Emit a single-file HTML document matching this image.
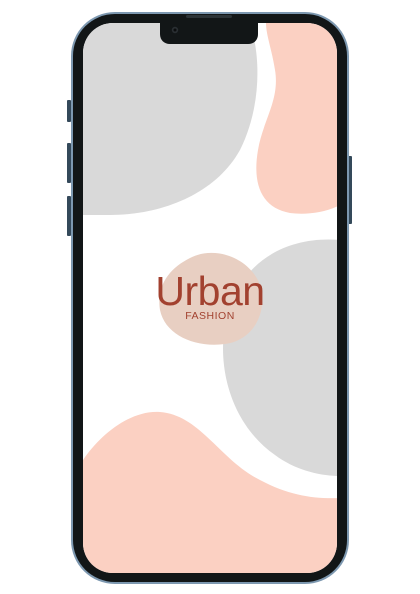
<!DOCTYPE html>
<html><head><meta charset="utf-8"><style>
html,body{margin:0;padding:0;background:#fff;width:420px;height:594px;overflow:hidden}
</style></head><body>
<svg width="420" height="594" viewBox="0 0 420 594" xmlns="http://www.w3.org/2000/svg">
<defs><clipPath id="scr"><rect x="83" y="23" width="254" height="550" rx="30"/></clipPath></defs>
<!-- side buttons -->
<rect x="67" y="100" width="4" height="22" rx="1" fill="#34495a"/>
<rect x="67" y="143" width="4" height="40" rx="1" fill="#34495a"/>
<rect x="67" y="196" width="4" height="40" rx="1" fill="#34495a"/>
<rect x="348" y="156" width="4" height="68" rx="1" fill="#34495a"/>
<!-- frame -->
<rect x="71" y="12" width="278" height="572" rx="44" fill="#7d98b0"/>
<rect x="73" y="14" width="274" height="568" rx="42" fill="#121617"/>
<rect x="83" y="23" width="254" height="550" rx="30" fill="#fff"/>
<g clip-path="url(#scr)">
<path d="M83 23 L250 23 C262 60 260 110 240 150 C215 195 160 215 110 215 L83 215 Z" fill="#d9d9d9"/>
<path d="M266 23 L340 23 L340 205 C325 213 305 215 290 213 C262 208 252 185 258 150 C263 120 280 100 275 70 C272 50 266 35 266 23 Z" fill="#fbd0c2"/>
<path d="M340 240 C290 236 250 258 232 300 C212 350 225 420 275 455 C295 470 320 476 340 476 Z" fill="#d9d9d9"/>
<path d="M83 460 C100 435 130 410 160 412 C200 415 220 460 260 480 C290 496 315 499 340 498 L340 580 L83 580 Z" fill="#fbd0c2"/>
</g>
<!-- notch -->
<path d="M160 22 L258 22 L258 34 C258 40 254 44 248 44 L170 44 C164 44 160 40 160 34 Z" fill="#121617"/>
<rect x="186" y="15" width="46" height="3" rx="1.5" fill="#2c3336"/>
<circle cx="175" cy="30" r="3.2" fill="#2a2f33"/><circle cx="175" cy="30" r="1.5" fill="#0b0d0e"/>
<!-- logo -->
<path d="M190 258 C215 245 250 258 260 285 C268 310 255 340 225 344 C195 348 165 335 160 310 C156 285 170 268 190 258 Z" fill="#e8cfc2"/>
<text x="210" y="305" text-anchor="middle" font-family="Liberation Sans, sans-serif" font-size="41" fill="#a2412f" letter-spacing="-0.5">Urban</text>
<text x="210" y="319" text-anchor="middle" font-family="Liberation Sans, sans-serif" font-size="10.5" fill="#a2412f" letter-spacing="0.5">FASHION</text>
</svg>
</body></html>
